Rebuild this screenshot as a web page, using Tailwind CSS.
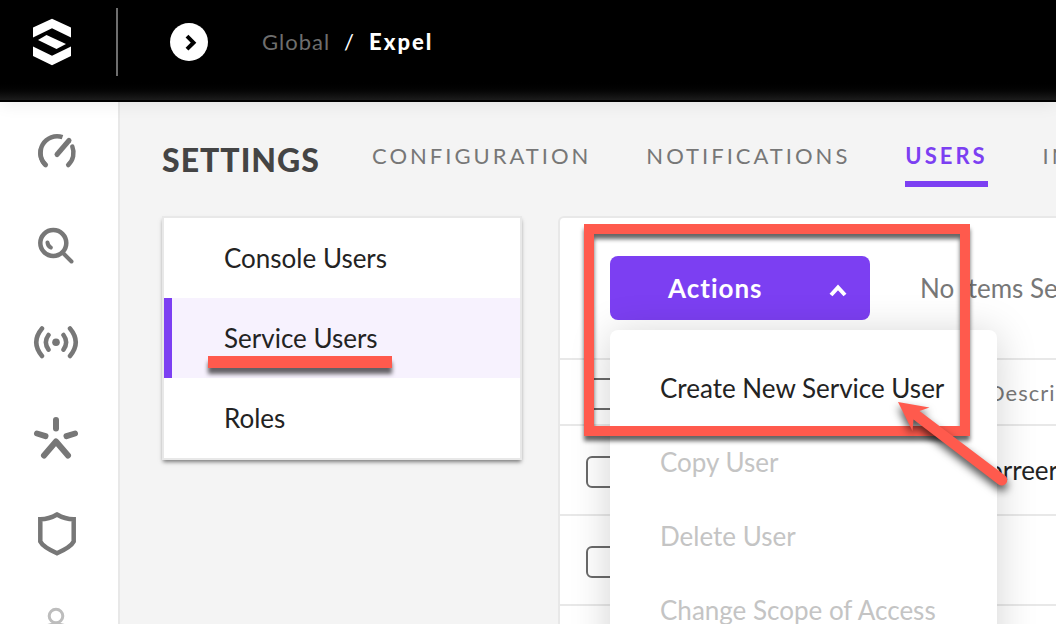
<!DOCTYPE html>
<html lang="en">
<head>
  <meta charset="UTF-8" />
  <meta name="viewport" content="width=device-width, initial-scale=1.0"/>
  <title>Settings - Service Users</title>
  <script src="https://cdn.jsdelivr.net/npm/@tailwindcss/browser@4"></script>
</head>
<body class="bg-[#f4f4f4] text-[#232323] font-[Lato,sans-serif] h-screen flex flex-col overflow-hidden">
  <header class="relative z-10 shrink-0 h-[102px] flex items-start bg-linear-to-b from-black from-80% to-[#1c1c1c] border-b-2 border-black shadow-[0_2px_16px_rgba(0,0,0,0.08)]">
    <a href="#" aria-label="Home" class="ml-8 mt-[18px]">
      <svg class="w-10 h-12" viewBox="0 0 40 48" fill="#fff">
        <path d="M1 9.500 20 .800 39 9.500V19.500L20 10.300 1 19.500Z"/>
        <path d="M1 28.500 20 37.700 39 28.500V38L20 47.300 1 38Z"/>
        <path d="M6 22 14.500 17 34 26 24.500 31Z"/>
      </svg>
    </a>
    <div class="ml-11 mt-2 w-0.5 h-[68px] bg-[#6e6e6e]"></div>
    <button type="button" aria-label="Expand" class="ml-[52px] mt-[23px] size-[38px] rounded-full bg-white flex items-center justify-center">
      <svg class="size-[38px]" viewBox="0 0 38 38" fill="none" stroke="#000" stroke-width="4"><path d="M17 13.200 23.500 19.700 17 26.200"/></svg>
    </button>
    <nav aria-label="Breadcrumb" class="ml-[54px] mt-[26px] flex gap-3.5 text-[22px] leading-8 tracking-[1px] text-white">
      <a href="#" class="text-[#6e6e6e]">Global</a>
      <span>/</span>
      <a href="#" class="font-black tracking-[2px]">Expel</a>
    </nav>
  </header>

  <div class="flex flex-1 min-h-0">
    <nav aria-label="Main" class="shrink-0 w-[120px] bg-white border-r-2 border-[#e8e8e8] pt-6 pl-8 flex flex-col gap-12 text-[#777] overflow-hidden">
      <a href="#" aria-label="Dashboard" class="block size-12">
        <svg class="size-12" viewBox="0 0 48 48" fill="none" stroke="currentColor" stroke-width="4.500" stroke-linecap="round">
          <path d="M14 39.500A16.700 16.700 0 0 1 30.500 11.200" stroke-linecap="butt"/>
          <path d="M13.800 39A16.700 16.700 0 0 1 9 23"/>
          <path d="M40.300 20.500A16.700 16.700 0 0 1 36.200 39"/>
          <path d="M25 28.500 37 14.500" stroke-width="5"/>
        </svg>
      </a>
      <a href="#" aria-label="Search" class="block size-12">
        <svg class="size-12" viewBox="0 0 48 48" fill="none" stroke="currentColor" stroke-width="4.500" stroke-linecap="round">
          <circle cx="21.300" cy="21" r="13"/>
          <path d="M31 31 39.500 39.500M15.500 20.500Q15.800 24 18.800 25.500" stroke-width="4"/>
        </svg>
      </a>
      <a href="#" aria-label="Sentinels" class="block size-12">
        <svg class="size-12" viewBox="0 0 48 48" fill="none" stroke="currentColor" stroke-width="4.500" stroke-linecap="round">
          <circle cx="24" cy="24.300" r="3.800" fill="currentColor" stroke="none"/>
          <path d="M16.500 17Q11.200 24.300 16.500 31.600M31.500 17Q36.800 24.300 31.500 31.600M10 10.500Q-1.500 24.300 10 38M38 10.500Q49.500 24.300 38 38"/>
        </svg>
      </a>
      <a href="#" aria-label="Activity" class="block size-12">
        <svg class="size-12" viewBox="0 0 48 48" fill="none" stroke="currentColor" stroke-width="6" stroke-linecap="round" stroke-linejoin="round">
          <path d="M24 6V14.500M5 19.500 13.500 22.200M43 19.500 34.500 22.200M12 41.500 24 27.500 36 41.500"/>
        </svg>
      </a>
      <a href="#" aria-label="Policies" class="block size-12">
        <svg class="size-12" viewBox="0 0 48 48" fill="none" stroke="currentColor" stroke-width="4.500">
          <path d="M25 4.500Q17 9.300 8.300 9.300V31.500Q11 37 25 43.200 39 37 41.700 31.500V9.300Q33 9.300 25 4.500Z"/>
        </svg>
      </a>
      <a href="#" aria-label="Account" class="block size-12 text-[#bdbdbd]">
        <svg class="size-12" viewBox="0 0 48 48" fill="none" stroke="currentColor" stroke-width="3">
          <circle cx="24" cy="10" r="6.800"/>
          <path d="M12 34V26Q12 18 24 18T36 26V34"/>
        </svg>
      </a>
    </nav>

    <main class="flex-1 min-w-0 pl-[42px] overflow-hidden">
      <div class="flex h-[114px] whitespace-nowrap">
        <h1 class="w-[210px] shrink-0 pt-[38px] text-[32px] leading-10 font-black tracking-[1px] text-[#444]">SETTINGS</h1>
        <nav aria-label="Settings" class="flex items-start gap-[55px] pt-10 text-[22px] leading-[28px] tracking-[3px] text-[#777]">
          <a href="#">CONFIGURATION</a>
          <a href="#">NOTIFICATIONS</a>
          <a href="#" aria-current="page" class="pb-[11px] border-b-6 border-[#7c3ff2] font-bold text-[#7c3ff2]">USERS</a>
          <a href="#">INTEGRATIONS</a>
        </nav>
      </div>

      <div class="flex gap-9">
        <nav aria-label="Users" class="self-start shrink-0 w-[360px] bg-white border-2 border-[#e8e8e8] shadow-[0_3px_4px_-1px_rgba(0,0,0,0.5)] text-[26px] leading-[80px]">
          <a href="#" class="block pl-[60px]">Console Users</a>
          <a href="#" aria-current="page" class="relative block pl-[52px] border-l-8 border-[#7c3ff2] bg-[#f7f2fe]">
            Service Users
            <span class="absolute left-9 bottom-[10px] w-[184px] h-3 bg-[#ff5a4d] shadow-[0_6px_4px_rgba(0,0,0,0.6)]"></span>
          </a>
          <a href="#" class="block pl-[60px]">Roles</a>
        </nav>

        <section class="relative flex-1 min-w-0 h-[520px] bg-white border-2 border-r-0 border-[#e8e8e8] rounded-tl-md">
          <div class="flex items-center h-[140px] pl-[50px] whitespace-nowrap">
            <button type="button" aria-expanded="true" class="shrink-0 w-[260px] h-16 pl-[58px] pr-5 flex items-center justify-between rounded-lg bg-[#7c3ff2] text-white text-[26px] font-bold tracking-[1px]">
              Actions
              <svg class="size-6" viewBox="0 0 24 24" fill="none" stroke="currentColor" stroke-width="4"><path d="M5 19 12 11.500 19 19"/></svg>
            </button>
            <span class="ml-[50px] text-[26px] text-[#777]">No Items Selected</span>
          </div>

          <table class="table-fixed w-[900px] border-collapse text-left whitespace-nowrap">
            <colgroup><col class="w-[428px]" /><col /></colgroup>
            <thead>
              <tr class="h-[66px] border-t-2 border-[#e8e8e8]">
                <th class="pl-[26px] pt-1"><input type="checkbox" aria-label="Select all users" class="block appearance-none size-8 border-2 border-[#6a6a6a] rounded-md" /></th>
                <th class="text-[22px] font-normal tracking-[1px] text-[#777]">Description</th>
              </tr>
            </thead>
            <tbody>
              <tr class="h-[90px] border-t-2 border-[#e8e8e8]">
                <td class="pl-[26px] pt-1"><input type="checkbox" aria-label="Select first user" class="block appearance-none size-8 border-2 border-[#6a6a6a] rounded-md" /></td>
                <td class="text-[26px]">orreer</td>
              </tr>
              <tr class="h-[90px] border-t-2 border-[#e8e8e8]">
                <td class="pl-[26px] pt-1"><input type="checkbox" aria-label="Select second user" class="block appearance-none size-8 border-2 border-[#6a6a6a] rounded-md" /></td>
                <td></td>
              </tr>
              <tr class="h-[90px] border-t-2 border-[#e8e8e8]"><td></td><td></td></tr>
            </tbody>
          </table>

          <!-- actions dropdown -->
          <div role="menu" class="absolute left-[50px] top-[112px] w-[387px] py-[21px] bg-white rounded-lg shadow-[0_4px_40px_rgba(0,0,0,0.18)] flex flex-col text-[26px] leading-[74px] text-[#c4c4c4]">
            <button type="button" role="menuitem" class="pl-[50px] text-left text-[#232323]">Create New Service User</button>
            <button type="button" role="menuitem" disabled class="pl-[50px] text-left">Copy User</button>
            <button type="button" role="menuitem" disabled class="pl-[50px] text-left">Delete User</button>
            <button type="button" role="menuitem" disabled class="pl-[50px] text-left">Change Scope of Access</button>
          </div>

          <!-- callout box and arrow -->
          <div class="absolute left-6 top-1.5 w-[386px] h-[212px] border-10 border-[#ff5a4d] drop-shadow-[0_5px_2px_rgba(0,0,0,0.6)] pointer-events-none"></div>
          <svg class="absolute left-[330px] top-[172px] w-[130px] h-[110px] drop-shadow-[0_5px_4px_rgba(0,0,0,0.7)] pointer-events-none" viewBox="0 0 130 110" fill="#ff5a4d">
            <path d="M8 12 39.500 17.500 29.500 21 115 85.500A5.500 5.500 0 0 1 108.500 94.500L23.500 29.500 22.500 41Z"/>
          </svg>
        </section>
      </div>
    </main>
  </div>
</body>
</html>
